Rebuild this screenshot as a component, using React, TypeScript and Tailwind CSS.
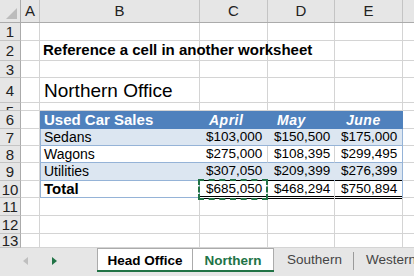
import React from "react";

const GRID = "#d4d4d4";
const TB = "#95b3d7";

const rowHeights = [18, 20, 17, 25, 8, 18, 17, 17, 18, 17, 18, 18, 14];

function Money({ v }: { v: string }) {
  return (
    <div className="absolute inset-0 flex items-center justify-between pl-[6px] pr-[8px] text-[13.5px] text-black">
      <span>$</span>
      <span>{v}</span>
    </div>
  );
}

export default function App() {
  const data: Record<number, string[]> = {
    7: ["Sedans", "103,000", "150,500", "175,000"],
    8: ["Wagons", "275,000", "108,395", "299,495"],
    9: ["Utilities", "307,050", "209,399", "276,399"],
  };

  return (
    <div
      className="w-[414px] h-[276px] overflow-hidden bg-white flex flex-col"
      style={{ fontFamily: '"Liberation Sans", Arial, sans-serif' }}
    >
      {/* column header */}
      <div className="flex h-[23px] shrink-0 bg-[#e6e6e6] border-b border-[#ababab] text-[15px] text-[#222]">
        <div className="w-[21px] shrink-0 border-r border-[#ababab] relative">
          <div className="absolute right-[3px] bottom-[3px] w-0 h-0 border-l-[11px] border-l-transparent border-b-[11px] border-b-[#bcbcbc]" />
        </div>
        <div className="w-[19px] shrink-0 border-r border-[#c4c4c4] flex items-center justify-center">A</div>
        <div className="w-[160px] shrink-0 border-r border-[#c4c4c4] flex items-center justify-center">B</div>
        <div className="w-[68px] shrink-0 border-r border-[#c4c4c4] flex items-center justify-center">C</div>
        <div className="w-[67px] shrink-0 border-r border-[#c4c4c4] flex items-center justify-center">D</div>
        <div className="w-[68px] shrink-0 border-r border-[#c4c4c4] flex items-center justify-center">E</div>
        <div className="flex-1" />
      </div>

      {rowHeights.map((h, i) => {
        const r = i + 1;
        const isTable = r >= 6 && r <= 10;
        const band = r === 7 || r === 9;
        return (
          <div key={r} className="flex shrink-0 relative" style={{ height: h }}>
            <div className="w-[21px] shrink-0 bg-[#e6e6e6] border-r border-[#ababab] border-b border-b-[#c4c4c4] flex items-center justify-center text-[15px] text-[#222] overflow-hidden leading-none">
              <span className={r === 5 ? "translate-y-[5px]" : ""}>{r}</span>
            </div>
            <div className="w-[19px] shrink-0 border-r border-b" style={{ borderColor: GRID }} />
            {/* B */}
            {r === 6 ? (
              <div className="w-[160px] shrink-0 bg-[#4f81bd] border-l border-[#4f81bd] flex items-center pl-[3px] text-white font-bold text-[15px]">
                Used Car Sales
              </div>
            ) : isTable ? (
              <div
                className={`w-[160px] shrink-0 border-l border-b flex items-center pl-[3px] text-black ${band ? "bg-[#dce6f1]" : "bg-white"} ${r === 10 ? "font-bold text-[15px] border-r" : "text-[14px]"}`}
                style={{ borderColor: TB }}
              >
                {r === 10 ? "Total" : data[r][0]}
              </div>
            ) : (
              <div className="w-[160px] shrink-0 border-r border-b relative" style={{ borderColor: GRID }}>
                {r === 2 && (
                  <div className="absolute left-[3px] top-0 bottom-0 flex items-center whitespace-nowrap font-bold text-[15px] text-black">
                    Reference a cell in another worksheet
                  </div>
                )}
                {r === 4 && (
                  <div className="absolute left-[4px] top-0 bottom-0 flex items-end pb-[2px] whitespace-nowrap text-[19px] text-black leading-none">
                    Northern Office
                  </div>
                )}
              </div>
            )}
            {/* C D E */}
            {[0, 1, 2].map((c) => {
              const w = c === 1 ? "w-[67px]" : "w-[68px]";
              if (r === 6) {
                const label = ["April", "May", "June"][c];
                return (
                  <div
                    key={c}
                    className={`${w} shrink-0 bg-[#4f81bd] flex items-center ${c === 2 ? "pl-[11px] border-r border-[#4f81bd]" : "pl-[9px]"} text-white font-bold italic text-[14px] tracking-[0.5px]`}
                  >
                    {label}
                  </div>
                );
              }
              if (r >= 7 && r <= 9) {
                return (
                  <div
                    key={c}
                    className={`${w} shrink-0 relative border-b ${band ? "bg-[#dce6f1]" : "bg-white border-r"} ${c === 2 ? "border-r" : ""}`}
                    style={{ borderBottomColor: TB, borderRightColor: c === 2 ? TB : GRID }}
                  >
                    <Money v={data[r][c + 1]} />
                  </div>
                );
              }
              if (r === 10) {
                const vals = ["685,050", "468,294", "750,894"];
                return (
                  <div
                    key={c}
                    className={`${w} shrink-0 relative border-r`}
                    style={{ borderRightColor: c === 2 ? TB : GRID }}
                  >
                    <div className="absolute left-0 right-0 top-[-1px] h-px bg-black" />
                    <div className="absolute left-0 right-0 bottom-[-1px] h-[3px] border-t border-b border-black" />
                    <Money v={vals[c]} />
                    {c === 0 && (
                      <div className="absolute left-[-2px] right-[-1px] top-[-2px] bottom-[-2px] border-2 border-dashed border-[#217346] z-10" />
                    )}
                  </div>
                );
              }
              return <div key={c} className={`${w} shrink-0 border-r border-b`} style={{ borderColor: GRID }} />;
            })}
            <div className="flex-1 border-b" style={{ borderColor: GRID }} />
          </div>
        );
      })}

      {/* sheet tabs */}
      <div className="flex-1 bg-[#e6e6e6] flex items-stretch relative">
        <div className="w-[97px] shrink-0 relative">
          <div className="absolute left-[23px] top-[9px] w-0 h-0 border-y-[4px] border-y-transparent border-r-[5px] border-r-[#bfbfbf]" />
          <div className="absolute left-[52px] top-[9px] w-0 h-0 border-y-[4px] border-y-transparent border-l-[5px] border-l-[#217346]" />
        </div>
        <div className="w-[96px] shrink-0 bg-white border-l border-r border-t border-[#ababab] h-[24px] flex items-center justify-center font-bold text-[13.5px] text-black relative">
          <span className="pt-[1px]">Head Office</span>
          <div className="absolute left-[-1px] right-[-1px] bottom-0 h-[2px] bg-[#217346]" />
        </div>
        <div className="w-[81px] shrink-0 bg-white border-r border-t border-[#ababab] h-[24px] flex items-center justify-center font-bold text-[13.5px] text-[#217346] relative">
          <span className="pt-[1px]">Northern</span>
          <div className="absolute left-0 right-[-1px] bottom-0 h-[2px] bg-[#217346]" />
        </div>
        <div className="w-[80px] shrink-0 h-[24px] flex items-center justify-center text-[13.5px] text-[#444] relative">
          <span className="pt-[1px] pl-[1px]">Southern</span>
          <div className="absolute right-0 top-[4px] bottom-[2px] w-px bg-[#9a9a9a]" />
        </div>
        <div className="h-[24px] flex items-center pl-[12px] text-[13.5px] text-[#444] whitespace-nowrap">
          <span className="pt-[1px]">Western</span>
        </div>
      </div>
    </div>
  );
}
